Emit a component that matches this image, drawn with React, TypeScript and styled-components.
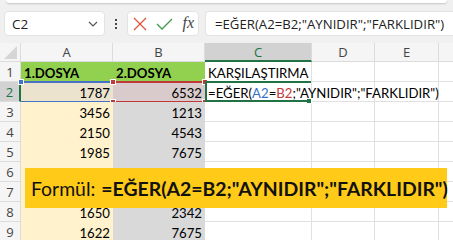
import React from 'react';
import styled, { createGlobalStyle } from 'styled-components';

const GlobalStyle = createGlobalStyle`
  html, body {
    margin: 0;
    padding: 0;
    background: #ffffff;
  }
`;

const UI_FONT = `"Open Sans", "Noto Sans", sans-serif`;
const CELL_FONT = `Lato, "Liberation Sans", sans-serif`;

const GREEN = '#217346';

type CellData = {
  text?: React.ReactNode;
  bg?: string;
  align?: 'left' | 'right';
  bold?: boolean;
  range?: string;
  handles?: boolean;
  active?: boolean;
};

const columns = ['A', 'B', 'C', 'D', 'E', ''];

const aValues = ['1787', '3456', '2150', '1985', '', '', '1650', '1622'];
const bValues = ['6532', '1213', '4543', '7675', '', '', '2342', '7675'];

const buildRows = (): CellData[][] => {
  const rows: CellData[][] = [];
  rows.push([
    { text: '1.DOSYA', bg: '#92d050', bold: true },
    { text: '2.DOSYA', bg: '#92d050', bold: true },
    { text: 'KARŞILAŞTIRMA' },
    {},
    {},
    {},
  ]);
  aValues.forEach((a, i) => {
    if (i === 0) {
      rows.push([
        { text: a, bg: '#ece3cf', align: 'right', range: '#4472c4' },
        { text: bValues[i], bg: '#d9cbcb', align: 'right', range: '#c0393b', handles: true },
        {
          active: true,
          text: (
            <>
              =EĞER(<Ref color="#3a6fc4">A2</Ref>=<Ref color="#c0393b">B2</Ref>;"AYNIDIR";"FARKLIDIR")
            </>
          ),
        },
        {},
        {},
        {},
      ]);
    } else {
      rows.push([
        { text: a, bg: '#fff2cc', align: 'right' },
        { text: bValues[i], bg: '#d9d9d9', align: 'right' },
        {},
        {},
        {},
        {},
      ]);
    }
  });
  return rows;
};

const App = () => {
  const rows = buildRows();

  return (
    <Page>
      <GlobalStyle />
      <Ribbon />
      <FormulaBar>
        <NameBox>
          <span>C2</span>
          <svg width="10" height="6" viewBox="0 0 10 6">
            <path d="M1 1 L5 5 L9 1" fill="none" stroke="#555" strokeWidth="1.2" />
          </svg>
        </NameBox>
        <Dots>
          <i />
          <i />
          <i />
        </Dots>
        <ActionBox>
          <svg width="14" height="14" viewBox="0 0 14 14">
            <path d="M1 1 L13 13 M13 1 L1 13" stroke="#e2553d" strokeWidth="1.3" />
          </svg>
          <svg width="17" height="12" viewBox="0 0 17 12">
            <path d="M1 6 L6 11 L16 1" fill="none" stroke="#3f9b4c" strokeWidth="1.3" />
          </svg>
          <Fx>fx</Fx>
        </ActionBox>
        <FormulaInput>=EĞER(A2=B2;"AYNIDIR";"FARKLIDIR")</FormulaInput>
      </FormulaBar>

      <Sheet>
        <Corner>
          <svg width="13" height="13" viewBox="0 0 13 13">
            <path d="M13 0 L13 13 L0 13 Z" fill="#d6d6d6" />
          </svg>
        </Corner>
        {columns.map((c) => (
          <ColHeader key={c || 'x'} selected={c === 'C'}>
            {c}
          </ColHeader>
        ))}
        {rows.map((row, r) => (
          <React.Fragment key={r}>
            <RowHeader selected={r === 1}>{r + 1}</RowHeader>
            {row.map((cell, c) => (
              <Cell
                key={c}
                bg={cell.bg}
                align={cell.align}
                bold={cell.bold}
                active={cell.active}
              >
                {cell.text}
                {cell.range && <RangeBox color={cell.range} />}
                {cell.range && !cell.handles && <Handle color={cell.range} corner="tl" />}
                {cell.handles && (
                  <>
                    <Handle color={cell.range} corner="tl" />
                    <Handle color={cell.range} corner="tr" />
                    <Handle color={cell.range} corner="bl" />
                    <Handle color={cell.range} corner="br" />
                  </>
                )}
                {cell.active && <FillHandle />}
              </Cell>
            ))}
          </React.Fragment>
        ))}
        <Banner>
          <span>Formül:</span>
          <b>=EĞER(A2=B2;"AYNIDIR";"FARKLIDIR")</b>
        </Banner>
      </Sheet>
    </Page>
  );
};

export default App;

// css

const Page = styled.div`
  width: 453px;
  height: 240px;
  overflow: hidden;
  background: #f0f0f0;
`;

const Ribbon = styled.div`
  height: 3px;
  margin: 0 6px;
  background: #ffffff;
  border-radius: 0 0 6px 6px;
  box-shadow: 0 1px 2px rgba(0, 0, 0, 0.18);
`;

const FormulaBar = styled.div`
  display: flex;
  align-items: center;
  height: 25px;
  margin-top: 8px;
  padding-left: 4px;
`;

const Box = styled.div`
  box-sizing: border-box;
  height: 25px;
  background: #ffffff;
  border: 1px solid #e3e3e3;
  border-radius: 4px;
  display: flex;
  align-items: center;
`;

const NameBox = styled(Box)`
  width: 101px;
  padding: 0 6px 0 7px;
  justify-content: space-between;

  font-family: ${UI_FONT};
  font-size: 13.5px;
  color: #222;
`;

const Dots = styled.div`
  width: 22px;
  display: flex;
  flex-direction: column;
  align-items: center;
  gap: 2px;

  i {
    width: 2px;
    height: 2px;
    background: #444;
  }
`;

const ActionBox = styled(Box)`
  width: 72px;
  padding: 0 4px 0 5px;
  justify-content: space-between;
`;

const Fx = styled.span`
  font-family: "Liberation Serif", serif;
  font-style: italic;
  font-size: 16px;
  color: #444;
  margin-top: -2px;
`;

const FormulaInput = styled(Box)`
  flex: 1;
  margin-left: 6px;
  padding-left: 9px;
  border-radius: 4px 0 0 4px;
  border-right: none;

  font-family: ${UI_FONT};
  font-size: 13.2px;
  color: #222;
  white-space: nowrap;
  overflow: hidden;
`;

const Sheet = styled.div`
  position: relative;
  display: grid;
  grid-template-columns: 21px 92px 92px 107px 63px 64px 40px;
  grid-template-rows: 19px repeat(9, 20px);
  margin-top: 7px;
  background: #ffffff;
`;

const Corner = styled.div`
  display: flex;
  align-items: flex-end;
  justify-content: flex-end;
  padding: 0 3px 2px 0;
  background: #f5f5f5;
  border-right: 1px solid #dcdcdc;
  border-bottom: 1px solid #dcdcdc;
`;

const ColHeader = styled.div<{ selected?: boolean }>`
  box-sizing: border-box;
  display: flex;
  align-items: center;
  justify-content: center;
  background: ${(p) => (p.selected ? '#d2d2d2' : '#f5f5f5')};
  border-right: 1px solid #dcdcdc;
  border-bottom: ${(p) => (p.selected ? `2px solid ${GREEN}` : '1px solid #dcdcdc')};

  font-family: ${UI_FONT};
  font-size: 13px;
  color: ${(p) => (p.selected ? GREEN : '#444')};
`;

const RowHeader = styled.div<{ selected?: boolean }>`
  box-sizing: border-box;
  display: flex;
  align-items: center;
  justify-content: center;
  background: ${(p) => (p.selected ? '#d2d2d2' : '#f5f5f5')};
  border-right: ${(p) => (p.selected ? `2px solid ${GREEN}` : '1px solid #dcdcdc')};
  border-bottom: 1px solid #dcdcdc;

  font-family: ${UI_FONT};
  font-size: 13px;
  color: ${(p) => (p.selected ? GREEN : '#444')};
`;

const Cell = styled.div<{ bg?: string; align?: string; bold?: boolean; active?: boolean }>`
  position: relative;
  box-sizing: border-box;
  display: flex;
  align-items: flex-end;
  justify-content: ${(p) => (p.align === 'right' ? 'flex-end' : 'flex-start')};
  padding: 0 2px 1px 3px;
  background: ${(p) => p.bg || '#ffffff'};
  border-right: 1px solid ${(p) => p.bg || '#e1e1e1'};
  border-bottom: 1px solid ${(p) => p.bg || '#e1e1e1'};
  white-space: nowrap;
  overflow: visible;
  z-index: ${(p) => (p.active ? 2 : 1)};

  font-family: ${CELL_FONT};
  font-size: 13.2px;
  line-height: 14px;
  font-weight: ${(p) => (p.bold ? 700 : 400)};
  color: #000;

  ${(p) =>
    p.active &&
    `
    box-shadow: inset 2px 0 0 ${GREEN};
    &::before {
      content: '';
      position: absolute;
      left: 0;
      right: 0;
      top: -1px;
      height: 2px;
      background: ${GREEN};
    }
    &::after {
      content: '';
      position: absolute;
      left: 0;
      right: 4px;
      bottom: -1px;
      height: 2px;
      background: ${GREEN};
    }
  `}
`;

const Ref = styled.span<{ color: string }>`
  color: ${(p) => p.color};
`;

const RangeBox = styled.div<{ color: string }>`
  position: absolute;
  inset: -1px -1px -2px 0;
  border-top: 2px solid ${(p) => p.color};
  border-bottom: 2px solid ${(p) => p.color};
  pointer-events: none;
`;

const Handle = styled.div<{ color?: string; corner: 'tl' | 'tr' | 'bl' | 'br' }>`
  position: absolute;
  width: 4px;
  height: 4px;
  background: ${(p) => p.color};
  border: 1px solid #ffffff;
  z-index: 3;
  ${(p) => (p.corner[0] === 't' ? 'top: -3px;' : 'bottom: -4px;')}
  ${(p) => (p.corner[1] === 'l' ? 'left: -3px;' : 'right: -4px;')}
`;

const FillHandle = styled.div`
  position: absolute;
  width: 4px;
  height: 4px;
  right: -1px;
  bottom: -3px;
  background: ${GREEN};
  border: 1px solid #ffffff;
`;

const Banner = styled.div`
  position: absolute;
  left: 25px;
  top: 125px;
  width: 422px;
  height: 40px;
  box-sizing: border-box;
  display: flex;
  align-items: center;
  gap: 6px;
  padding-left: 6px;
  background: #ffca18;
  z-index: 5;

  font-family: ${CELL_FONT};
  font-size: 19.4px;
  color: #111;
  white-space: nowrap;

  b {
    font-weight: 700;
  }
`;
